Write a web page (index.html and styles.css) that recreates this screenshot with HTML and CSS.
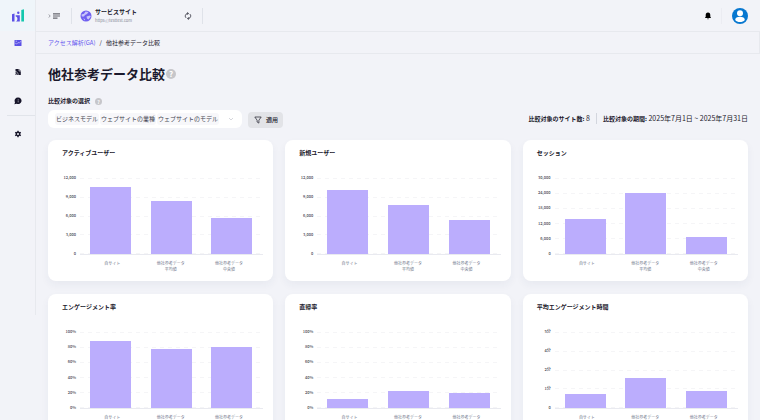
FILE: index.html
```html
<!DOCTYPE html>
<html lang="ja">
<head>
    <meta charset="UTF-8">
    <meta name="viewport" content="width=device-width, initial-scale=1.0">
    <title>他社参考データ比較</title>
    <link rel="stylesheet" href="styles.css">
</head>
<body>
<nav class="sidebar">
    <a href="#" class="logo" aria-label="ホーム">
        <svg width="12" height="13" viewBox="0 0 12 13">
            <path d="M0 5.200l2.500-.7V12.500H0z" fill="#5b50e6"/>
            <path d="M3.500 12.500c1.500-.3 1.900-1.300 1.900-2.800 0-1.300-.5-2-1.700-2.200V6.300H7.800V12.500z" fill="#5b50e6"/>
            <circle cx="6.300" cy="3.800" r="1.200" fill="#5b50e6"/>
            <path d="M9.300 1l2.700-.8v12.300H9.300z" fill="#14c8ae"/>
        </svg>
    </a>
    <a href="#" class="side-link active" aria-label="アクセス解析">
        <svg width="8" height="8" viewBox="0 0 8 8">
            <rect x="0.500" y="1" width="7" height="6" rx="0.600" fill="#5b50e6"/>
            <path d="M1.200 4.200l1.500.8 1.500-1.600 1 .8 2-2.200" fill="none" stroke="#f2f3f8" stroke-width="0.500"/>
            <path d="M1.600 2.200h1.400" stroke="#f2f3f8" stroke-width="0.600"/>
        </svg>
    </a>
    <a href="#" class="side-link" aria-label="レポート">
        <svg width="8" height="8" viewBox="0 0 8 8">
            <path d="M1.500 1h3.500l1.800 1.800V7H1.500z" fill="#17152a"/>
            <path d="M1 3.500c2 0 3.200 1.500 3.200 3.500M1 5.200c1 0 1.600.8 1.600 1.800M5 1v2h2" fill="none" stroke="#f2f3f8" stroke-width="0.600"/>
        </svg>
    </a>
    <a href="#" class="side-link" aria-label="お知らせ">
        <svg width="8" height="8" viewBox="0 0 8 8">
            <path d="M4.200.6a3.400 3.200 0 1 1-1.500 6.100L.4 7.300l.6-2A3.400 3.200 0 0 1 4.200.6z" fill="#17152a"/>
            <path d="M4.200 2v.8M4.200 3.400v2" stroke="#b9bac6" stroke-width="0.700"/>
        </svg>
    </a>
    <hr>
    <a href="#" class="side-link" aria-label="設定">
        <svg width="8" height="8" viewBox="0 0 8 8">
            <circle cx="4" cy="4" r="1.700" fill="none" stroke="#17152a" stroke-width="1.400"/>
            <path d="M4 .8v1.200M4 6v1.200M1.200 2.400l1 .6M5.800 5l1 .6M1.200 5.600l1-.6M5.800 3l1-.6" stroke="#17152a" stroke-width="1.300"/>
        </svg>
    </a>
</nav>

<div class="page">
    <header class="header">
        <button type="button" class="icon-button menu-button" aria-label="メニュー">
            <svg width="12" height="8" viewBox="0 0 12 8">
                <path d="M.8 2.500L2.200 4 .8 5.500" fill="none" stroke="#777783" stroke-width="0.700"/>
                <path d="M5 1.800h7M5 4h7M5 6.200h4.500" stroke="#66666e" stroke-width="1.200"/>
            </svg>
        </button>
        <div class="site">
            <svg width="12" height="12" viewBox="0 0 12 12">
                <circle cx="6" cy="6" r="5.500" fill="#7060f0"/>
                <path d="M1.500 4.500l2.500-.8L5.500 1.500l3 .5L7 4 5 5l-1 1.500H1.800zM6.500 6.500l3.500-1 .8 1L8.500 9.500 7 8.500zM3 8.500l2 .5v1.500z" fill="#c9c5fa"/>
            </svg>
            <div>
                <p class="site-name">サービスサイト</p>
                <p class="site-url">https://testtest.com</p>
            </div>
            <button type="button" class="icon-button reload-button" aria-label="サイト切替">
                <svg width="8" height="8" viewBox="0 0 8 8">
                    <path d="M3 1.600A2.600 2.600 0 0 0 2 5.800M5 6.400A2.600 2.600 0 0 0 6 2.200" fill="none" stroke="#333340" stroke-width="0.900"/>
                    <path d="M3.200 0v3L5 1.600zM4.800 8V5L3 6.400z" fill="#333340"/>
                </svg>
            </button>
        </div>
        <div class="user-menu">
            <button type="button" class="icon-button" aria-label="通知">
                <svg width="8" height="8" viewBox="0 0 8 8">
                    <path d="M4 .6c1.600 0 2.300 1.100 2.300 2.600v1.500l.8 1.300H.9l.8-1.300V3.200C1.700 1.700 2.400.6 4 .6zM3 6.400h2L4 7.400z" fill="#000"/>
                </svg>
            </button>
            <button type="button" class="icon-button avatar" aria-label="アカウント">
                <svg width="16" height="16" viewBox="0 0 16 16">
                    <circle cx="8" cy="8" r="8" fill="#0878d0"/>
                    <circle cx="8" cy="5.200" r="3" fill="#fff"/>
                    <path d="M3.200 12c0-2.300 2-3.300 4.800-3.300s4.800 1 4.800 3.300c-1.100 1.500-2.800 2.100-4.800 2.100s-3.700-.6-4.800-2.100z" fill="#fff"/>
                </svg>
            </button>
        </div>
    </header>

    <div class="breadcrumb">
        <a href="#">アクセス解析(GA)</a>
        <span>/</span>
        <span>他社参考データ比較</span>
    </div>

    <main>
        <h1>他社参考データ比較 <span class="help help-large">?</span></h1>
        <div class="toolbar">
            <div class="filter">
                <p class="filter-label" id="targetLabel">比較対象の選択 <span class="help">?</span></p>
                <div class="filter-row">
                    <button type="button" class="multi-select" aria-labelledby="targetLabel" aria-haspopup="listbox">
                        <span class="chip">ビジネスモデル</span>
                        <span class="chip">ウェブサイトの業種</span>
                        <span class="chip">ウェブサイトのモデル</span>
                        <svg class="arrow" width="6" height="4" viewBox="0 0 6 4">
                            <path d="M1 1l2 2 2-2" fill="none" stroke="#c4c6cf" stroke-width="0.700"/>
                        </svg>
                    </button>
                    <button type="button" class="apply">
                        <svg width="8" height="8" viewBox="0 0 8 8">
                            <path d="M.8 1h6.400L4.900 4.200v2.900L3.100 6V4.200z" fill="none" stroke="#333340" stroke-width="0.800"/>
                        </svg>
                        適用
                    </button>
                </div>
            </div>
            <div class="summary">
                <p><b>比較対象のサイト数:</b> 8</p>
                <p><b>比較対象の期間:</b> 2025年7月1日 ~ 2025年7月31日</p>
            </div>
        </div>
        <div class="cards" id="cards"></div>
    </main>
</div>

<script src="script.js"></script>
</body>
</html>
```
FILE: styles.css
```css
* {
    box-sizing: border-box;
}
body {
    display: flex;
    align-items: flex-start;
    margin: 0;
    background-color: #f2f3f8;
    color: #1b192c;
    font-family: "Noto Sans CJK JP", sans-serif;
    font-size: 6px;
    line-height: 8px;
}
p, h1, h2 {
    margin: 0;
}
a {
    color: #6557ef;
    text-decoration: none;
}
button {
    border: none;
    padding: 0;
    color: inherit;
    font: inherit;
    cursor: pointer;
}
svg {
    display: block;
}

/* sidebar */
.sidebar {
    flex: none;
    display: flex;
    flex-direction: column;
    align-items: center;
    width: 36px;
    height: 75vh;
    border-right: 1px solid #e7e9ee;
}
.logo {
    display: flex;
    align-items: center;
    justify-content: center;
    width: 100%;
    height: 31px;
    background-color: #eff5fa;
}
.side-link {
    padding: 8px;
    margin-bottom: 5px;
}
.sidebar hr {
    align-self: flex-end;
    width: 28px;
    margin: -3px 0 6px;
    border: none;
    border-top: 1px solid #e1e4ea;
}

/* header */
.page {
    flex: 1;
    min-width: 0;
}
.header {
    display: flex;
    align-items: center;
    height: 32px;
    padding: 0 12px;
    border-bottom: 1px solid #e7e9ee;
}
.icon-button {
    background: none;
}
.menu-button {
    margin-right: 11px;
}
.site {
    display: flex;
    align-items: center;
    gap: 3px;
    width: 132px;
    height: 16px;
    padding: 0 10px 0 8px;
    border-left: 1px solid #dfe2e9;
    border-right: 1px solid #dfe2e9;
}
.site-name {
    font-weight: bold;
}
.site-url {
    color: #858795;
    font-size: 4px;
}
.reload-button {
    margin-left: auto;
}
.user-menu {
    display: flex;
    align-items: center;
    margin-left: auto;
}
.avatar {
    margin-left: 9px;
    padding-left: 10px;
    border-left: 1px solid #ebecf2;
}
.breadcrumb {
    display: flex;
    align-items: center;
    gap: 4px;
    height: 22px;
    padding: 0 12px;
    border-right: 1px solid #e7e9ee;
    border-bottom: 1px solid #e7e9ee;
}

/* title and filters */
main {
    padding: 10px 12px;
}
h1 {
    display: flex;
    align-items: center;
    gap: 1px;
    font-size: 13px;
    line-height: 20px;
}
.help {
    width: 7px;
    height: 7px;
    margin-left: 5px;
    border-radius: 50%;
    background-color: #c6c6ca;
    color: #fff;
    font-size: 5px;
    line-height: 7px;
    text-align: center;
}
.help-large {
    width: 10px;
    height: 10px;
    margin-left: 0;
    font-size: 8px;
    line-height: 10px;
}
.toolbar {
    display: flex;
    align-items: flex-end;
    justify-content: space-between;
    margin: 13px 0 12px;
}
.filter-label {
    display: flex;
    align-items: center;
    margin-bottom: 5px;
    font-weight: bold;
}
.filter-row {
    display: flex;
    align-items: flex-end;
    gap: 6px;
}
.multi-select {
    display: flex;
    align-items: center;
    gap: 1px;
    width: 194px;
    height: 18px;
    padding: 0 8px 0 7px;
    border-radius: 6px;
    background-color: #fff;
    color: #444450;
}
.chip {
    padding: 2px 1px;
    border-radius: 3px;
    background-color: #f7f7fa;
    white-space: nowrap;
}
.arrow {
    margin-left: auto;
}
.apply {
    display: flex;
    align-items: center;
    gap: 4px;
    height: 16px;
    padding: 0 5px 0 6px;
    border-radius: 4px;
    background-color: #e2e3e7;
    font-weight: 500;
}
.summary {
    display: flex;
    margin-bottom: 4px;
    font-size: 7px;
    line-height: 10px;
}
.summary b {
    font-size: 6px;
}
.summary p + p {
    margin-left: 6px;
    padding-left: 6px;
    border-left: 1px solid #d3d6de;
}

/* cards */
.cards {
    display: grid;
    grid-template-columns: repeat(3, 1fr);
    gap: 13px 12px;
}
.card {
    padding: 9px 10px 9px 14px;
    border-radius: 8px;
    background-color: #fff;
    box-shadow: 0 4px 8px rgba(40, 50, 90, 0.05);
}
.card h2 {
    margin-bottom: 21px;
    font-size: 6px;
    line-height: 8px;
}
.chart {
    display: grid;
    grid-template-columns: 14px 1fr;
    column-gap: 4px;
}
.scale {
    display: flex;
    flex-direction: column;
    justify-content: space-between;
    margin: -4px 0 -1px;
    color: #444450;
    font-size: 4px;
    font-weight: 500;
    line-height: 6px;
    text-align: right;
}
.plot {
    display: grid;
    height: 77px;
    border-bottom: 1px solid #e9eaf0;
}
.lines, .bars {
    grid-area: 1 / 1;
    display: flex;
}
.lines {
    flex-direction: column;
    justify-content: space-between;
}
.lines i {
    height: 1px;
    background: repeating-linear-gradient(to right, #f5f5f7 0 4px, transparent 4px 8px);
}
.bars {
    align-items: flex-end;
    justify-content: space-around;
    padding-right: 1px;
}
.bar {
    width: 41px;
    background-color: #bbadfd;
}
.names {
    grid-column: 2;
    display: grid;
    grid-template-columns: repeat(3, 1fr);
    margin-top: 5px;
    padding: 0 5px 0 3px;
    min-height: 12px;
    color: #6d7489;
    font-size: 4px;
    line-height: 6px;
    text-align: center;
}
```
FILE: script.js
```js
const names = ['自サイト', '他社参考データ<br>平均値', '他社参考データ<br>中央値'];

// values are percentages of the top of the scale
const charts = [
    { title: 'アクティブユーザー', scale: ['12,000', '9,000', '6,000', '3,000', '0'], values: [88, 70, 47] },
    { title: '新規ユーザー', scale: ['12,000', '9,000', '6,000', '3,000', '0'], values: [84, 65, 45] },
    { title: 'セッション', scale: ['30,000', '24,000', '18,000', '12,000', '6,000', '0'], values: [46, 80, 23] },
    { title: 'エンゲージメント率', scale: ['100%', '80%', '60%', '40%', '20%', '0%'], values: [88, 77, 80] },
    { title: '直帰率', scale: ['100%', '80%', '60%', '40%', '20%', '0%'], values: [12, 23, 20] },
    { title: '平均エンゲージメント時間', scale: ['5分', '4分', '2分', '1分', '0'], values: [18, 39, 22] }
];

document.getElementById('cards').innerHTML = charts.map(chart => `
    <section class="card">
        <h2>${chart.title}</h2>
        <div class="chart">
            <div class="scale">${chart.scale.map(label => `<span>${label}</span>`).join('')}</div>
            <div class="plot">
                <div class="lines">${chart.scale.map(() => '<i></i>').join('')}</div>
                <div class="bars">${chart.values.map(value => `<div class="bar" style="height: ${value}%"></div>`).join('')}</div>
            </div>
            <div class="names">${names.map(name => `<span>${name}</span>`).join('')}</div>
        </div>
    </section>
`).join('');
```
